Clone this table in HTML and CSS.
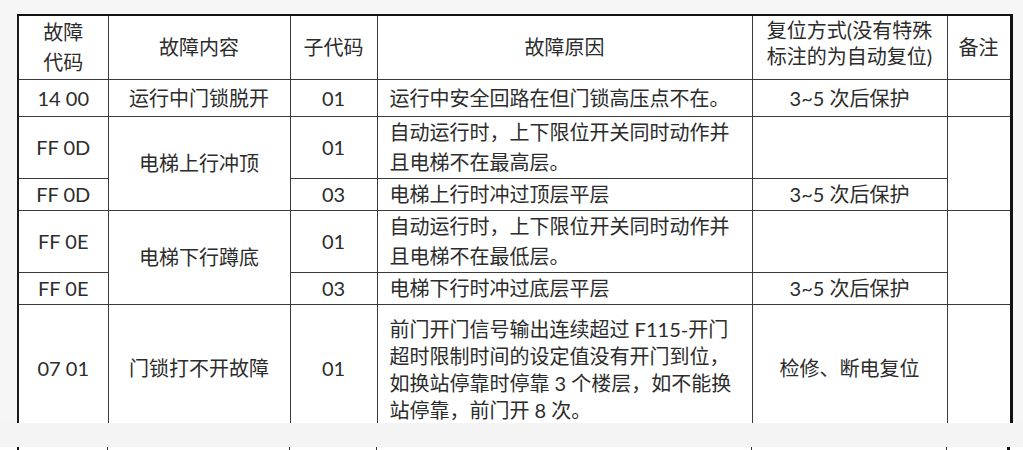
FILE: index.html
```html
<!DOCTYPE html>
<html lang="zh-CN">
<head>
<meta charset="utf-8">
<title>故障代码表</title>
<link rel="stylesheet" href="styles.css">
</head>
<body>
<div class="page">
  <div class="clip">
  <table class="fault">
    <colgroup>
      <col class="c1"><col class="c2"><col class="c3"><col class="c4"><col class="c5"><col class="c6">
    </colgroup>
    <tr class="r-head">
      <td class="mid lh30">故障<br>代码</td>
      <td class="mid">故障内容</td>
      <td class="mid">子代码</td>
      <td class="mid">故障原因</td>
      <td class="mid lh26 up">复位方式(没有特殊<br>标注的为自动复位)</td>
      <td class="mid end">备注</td>
    </tr>
    <tr class="r-one">
      <td class="mid">14 00</td>
      <td class="mid">运行中门锁脱开</td>
      <td class="mid">01</td>
      <td class="txt">运行中安全回路在但门锁高压点不在。</td>
      <td class="mid">3~5 次后保护</td>
      <td class="end"></td>
    </tr>
    <tr class="r-two">
      <td class="mid">FF 0D</td>
      <td class="mid" rowspan="2">电梯上行冲顶</td>
      <td class="mid">01</td>
      <td class="txt lh30">自动运行时，上下限位开关同时动作并<br>且电梯不在最高层。</td>
      <td></td>
      <td class="end" rowspan="2"></td>
    </tr>
    <tr class="r-sub">
      <td class="mid">FF 0D</td>
      <td class="mid">03</td>
      <td class="txt">电梯上行时冲过顶层平层</td>
      <td class="mid">3~5 次后保护</td>
    </tr>
    <tr class="r-two">
      <td class="mid">FF 0E</td>
      <td class="mid" rowspan="2">电梯下行蹲底</td>
      <td class="mid">01</td>
      <td class="txt lh30">自动运行时，上下限位开关同时动作并<br>且电梯不在最低层。</td>
      <td></td>
      <td class="end" rowspan="2"></td>
    </tr>
    <tr class="r-sub">
      <td class="mid">FF 0E</td>
      <td class="mid">03</td>
      <td class="txt">电梯下行时冲过底层平层</td>
      <td class="mid">3~5 次后保护</td>
    </tr>
    <tr class="r-last">
      <td class="mid">07 01</td>
      <td class="mid">门锁打不开故障</td>
      <td class="mid">01</td>
      <td class="txt lh28 low">前门开门信号输出连续超过 F115-开门<br>超时限制时间的设定值没有开门到位，<br>如换站停靠时停靠 3 个楼层，如不能换<br>站停靠，前门开 8 次。</td>
      <td class="mid">检修、断电复位</td>
      <td class="end"></td>
    </tr>
  </table>
  </div>
  <div class="gap"></div>
  <div class="strip">
    <span class="seg s1"></span><span class="seg s2"></span><span class="seg s3"></span><span class="seg s4"></span><span class="seg s5"></span><span class="seg s6"></span>
  </div>
</div>
</body>
</html>
```

FILE: styles.css
```css
html, body {
  margin: 0;
  padding: 0;
  background: #f6f6f6;
}

.page {
  padding: 14px 0 0 17px;
  width: 1023px;
  box-sizing: border-box;
}

.clip {
  height: 409px;
  overflow: hidden;
}

.fault {
  border-collapse: collapse;
  table-layout: fixed;
  width: 995px;
  background: #ffffff;
  font-family: "Lato", "Noto Sans CJK SC", sans-serif;
  font-size: 20px;
  color: #2c2c2c;
  border-top: 2px solid #111;
  border-left: 2px solid #1a1a1a;
  border-right: 3px solid #111;
}

.c1 { width: 90px; }
.c2 { width: 182px; }
.c3 { width: 87px; }
.c4 { width: 375px; }
.c5 { width: 195px; }
.c6 { width: 64px; }

.fault td {
  border: 1px solid #3a3a3a;
  padding: 0;
  line-height: 24px;
  vertical-align: middle;
  white-space: nowrap;
}

.fault td.end {
  border-right: 3px solid #111;
}

.mid { text-align: center; }
.fault td.txt { text-align: left; padding-left: 12px; }

.fault td.lh30 { line-height: 30px; }
.fault td.lh26 { line-height: 26px; }
.fault td.lh28 { line-height: 27px; }
.fault td.up { padding-bottom: 8px; }

.r-head { height: 64px; }
.r-one { height: 37px; }
.r-two { height: 62px; }
.r-sub { height: 32px; }
.r-last { height: 128px; }
.fault .r-last td.low { padding-top: 4px; }

.gap {
  height: 24px;
  margin-left: -17px;
  background: #f4f4f4;
}

.strip {
  display: grid;
  grid-template-columns: 90px 182px 87px 375px 195px 64px;
  height: 3px;
  margin-left: -17px;
  padding-left: 17px;
  background: #ffffff;
}

.seg {
  border-left: 1px solid #333;
}

.s1 { border-left: 2px solid #111; }
.s6 { border-right: 3px solid #111; }
```
